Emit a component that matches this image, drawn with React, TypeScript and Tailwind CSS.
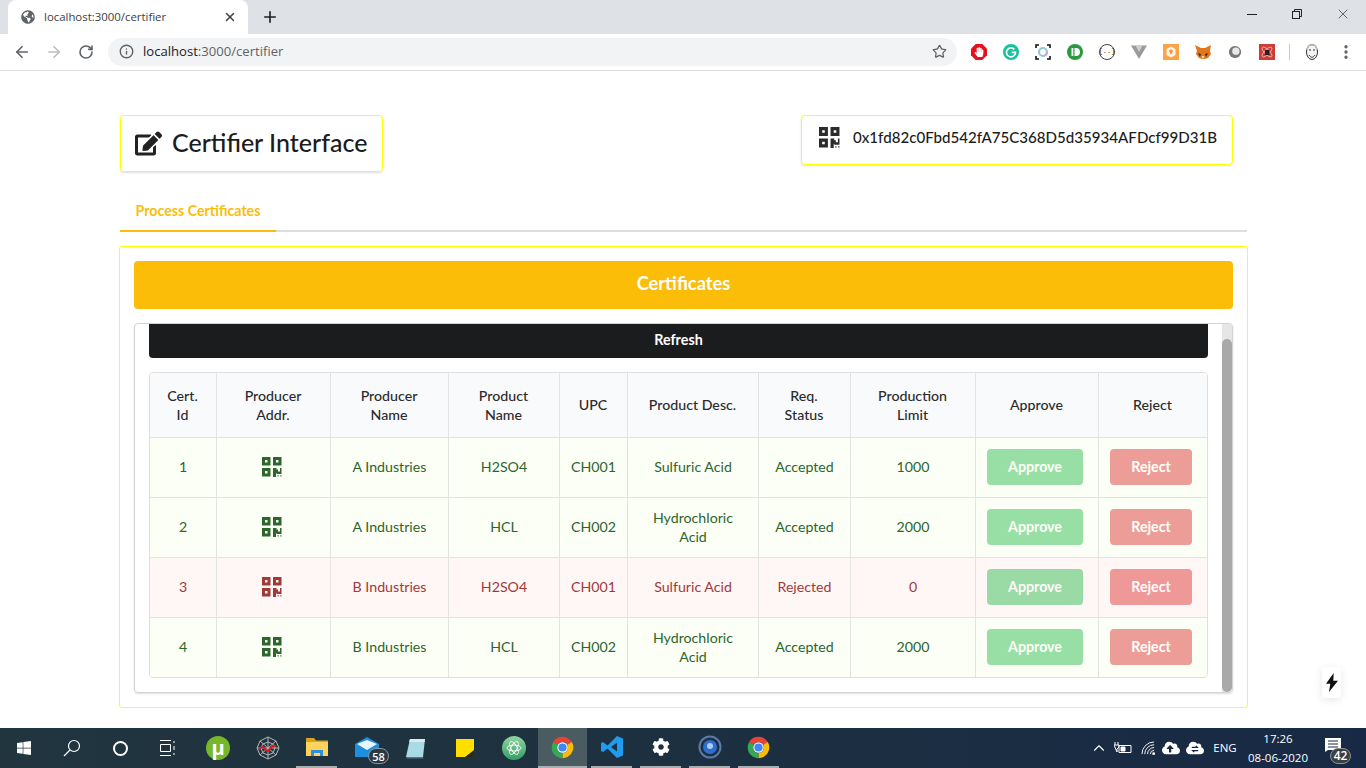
import { ArrowLeft, ArrowRight, Info, MoreVertical, Plus, RotateCw, Star, X, ChevronUp } from 'lucide-react'
import { FaCloud, FaCloudUploadAlt, FaCog, FaEdit, FaGlobeAmericas, FaHandPaper, FaWindows } from 'react-icons/fa'

const lato = "font-['Lato',sans-serif]"

const rows = [
  { id: 1, producer: 'A Industries', product: 'H2SO4', upc: 'CH001', desc: 'Sulfuric Acid', status: 'Accepted', limit: 1000 },
  { id: 2, producer: 'A Industries', product: 'HCL', upc: 'CH002', desc: 'Hydrochloric\nAcid', status: 'Accepted', limit: 2000 },
  { id: 3, producer: 'B Industries', product: 'H2SO4', upc: 'CH001', desc: 'Sulfuric Acid', status: 'Rejected', limit: 0 },
  { id: 4, producer: 'B Industries', product: 'HCL', upc: 'CH002', desc: 'Hydrochloric\nAcid', status: 'Accepted', limit: 2000 },
]

const headers = [
  'Cert.\nId',
  'Producer\nAddr.',
  'Producer\nName',
  'Product\nName',
  'UPC',
  'Product Desc.',
  'Req.\nStatus',
  'Production\nLimit',
  'Approve',
  'Reject',
]

const colWidths = ['w-[66px]', 'w-[114px]', 'w-[118px]', 'w-[111px]', 'w-[68px]', 'w-[131px]', 'w-[92px]', 'w-[125px]', 'w-[123px]', 'w-[109px]']

function QrIcon({ className }: { className?: string }) {
  return (
    <svg viewBox="0 0 20 20" className={className} fill="currentColor">
      <path fillRule="evenodd" d="M0 0h8.500v8.500H0zM3 3v2.500h2.500V3zM11 0h8.500v8.500H11zM14 3v2.500h2.500V3zM0 11h8.500v8.500H0zM3 14v2.500h2.500V14z" />
      <path d="M11 11h3.500v1.500h1.500v2h2v-3.500h1.500v6h-5v-1h-.5v4H11z" />
      <path d="M15.500 18.300h1.200v1.200h-1.200zM18.300 18.300h1.200v1.200h-1.200z" />
    </svg>
  )
}

function ChromeLogo() {
  return (
    <svg viewBox="0 0 24 24" className="h-[23px] w-[23px]">
      <circle cx="12" cy="12" r="8.500" fill="none" stroke="#ea4335" strokeWidth="5.500" strokeDasharray="17.800 35.600" transform="rotate(210 12 12)" />
      <circle cx="12" cy="12" r="8.500" fill="none" stroke="#fbbc05" strokeWidth="5.500" strokeDasharray="17.800 35.600" transform="rotate(330 12 12)" />
      <circle cx="12" cy="12" r="8.500" fill="none" stroke="#34a853" strokeWidth="5.500" strokeDasharray="17.800 35.600" transform="rotate(90 12 12)" />
      <circle cx="12" cy="12" r="5.500" fill="#fff" />
      <circle cx="12" cy="12" r="4.300" fill="#4285f4" />
    </svg>
  )
}

function Extensions() {
  return (
    <div className="ml-[6px] flex items-center">
      <div className="relative flex w-8 justify-center">
        <svg viewBox="0 0 16 16" className="h-4 w-4">
          <path d="M4.700 0h6.600L16 4.700v6.600L11.300 16H4.700L0 11.300V4.700z" fill="#e8101c" />
        </svg>
        <FaHandPaper size={10} className="absolute left-[11px] top-[3px] text-white" />
      </div>
      <div className="flex w-8 justify-center">
        <div className="flex h-4 w-4 items-center justify-center rounded-full bg-[#15c39a]">
          <svg viewBox="0 0 16 16" className="h-3 w-3" fill="none" stroke="#fff" strokeWidth="2.200">
            <path d="M12.500 4.500A6 6 0 1 0 14 8.500H9" />
          </svg>
        </div>
      </div>
      <div className="flex w-8 justify-center">
        <svg viewBox="0 0 16 16" className="h-4 w-4" fill="none">
          <path d="M1 4V1h3M12 1h3v3M15 12v3h-3M4 15H1v-3" stroke="#111" strokeWidth="1.600" />
          <circle cx="8" cy="8" r="4" stroke="#8fc7e0" strokeWidth="2.200" />
          <path d="M8 12a4 4 0 0 0 4-4" stroke="#c6a9e6" strokeWidth="2.200" />
        </svg>
      </div>
      <div className="flex w-8 justify-center">
        <svg viewBox="0 0 16 16" className="h-4 w-4">
          <circle cx="8" cy="8" r="8" fill="#2b9a3e" />
          <rect x="4.500" y="4" width="1.800" height="8" fill="#fff" />
          <path d="M7.500 4h1.500a4 4 0 0 1 0 8H7.500z" fill="#fff" />
        </svg>
      </div>
      <div className="flex w-8 justify-center">
        <div className="flex h-4 w-4 items-center justify-center rounded-full border border-[#444] font-['Liberation_Mono',monospace] text-[7px] leading-none text-[#333]">
          {'{..}'}
        </div>
      </div>
      <div className="flex w-8 justify-center">
        <svg viewBox="0 0 16 16" className="h-4 w-4">
          <path d="M0 1.500h16L8 15z" fill="#9a9a9a" />
          <path d="M4.500 1.500h7L8 8z" fill="#d0d0d0" />
        </svg>
      </div>
      <div className="flex w-8 justify-center">
        <svg viewBox="0 0 16 16" className="h-4 w-4">
          <rect width="16" height="16" fill="#fca347" />
          <path d="M8 2.500l4.500 2.600v5.800L8 13.500l-4.500-2.600V5.100z" fill="#fff" opacity="0.85" />
          <path d="M8 5l2 2-2 4-2-4z" fill="#f4913a" />
        </svg>
      </div>
      <div className="flex w-8 justify-center">
        <svg viewBox="0 0 16 16" className="h-4 w-4">
          <path d="M0 1l6 3h4l6-3-1 6 1 3-3 4-3 1H7l-3-1-3-4 1-3z" fill="#e2761b" />
          <path d="M3 9l3 1-1 3zM13 9l-3 1 1 3z" fill="#3b2a1c" />
          <path d="M6.500 12h3L8 15z" fill="#f5e0c8" />
        </svg>
      </div>
      <div className="flex w-8 justify-center">
        <svg viewBox="0 0 16 16" className="h-[14px] w-[14px]">
          <circle cx="8" cy="8" r="7" fill="#777" />
          <circle cx="9" cy="7" r="4.200" fill="#e8e8e8" />
        </svg>
      </div>
      <div className="flex w-8 justify-center">
        <svg viewBox="0 0 16 16" className="h-4 w-4">
          <rect width="16" height="16" fill="#cf3b34" />
          <ellipse cx="8" cy="8" rx="6.500" ry="2.500" fill="none" stroke="#f5c3c0" strokeWidth="0.800" transform="rotate(45 8 8)" />
          <ellipse cx="8" cy="8" rx="6.500" ry="2.500" fill="none" stroke="#f5c3c0" strokeWidth="0.800" transform="rotate(-45 8 8)" />
          <path d="M6 6h4.500v5H6z" fill="#222" />
        </svg>
      </div>
      <div className="ml-[6px] h-4 w-px bg-[#c8cacd]" />
      <div className="ml-[14px] flex w-4 justify-center">
        <svg viewBox="0 0 16 20" className="h-5 w-4" fill="none" stroke="#333" strokeWidth="1">
          <ellipse cx="8" cy="10" rx="5.500" ry="7.500" fill="#f4f4f4" />
          <path d="M3 8c0-7 10-7 10 0" strokeWidth="1.500" stroke="#bbb" />
          <path d="M5 8h2M9 8h2M5 13c2 3 4 3 6 0" />
        </svg>
      </div>
      <MoreVertical className="ml-[17px] h-[18px] w-[18px] text-[#5f6368]" strokeWidth={2.500} />
    </div>
  )
}

function Browser() {
  return (
    <div className="shrink-0 font-['Open_Sans',sans-serif]">
      <div className="flex h-[34px] items-stretch bg-[#dee1e6]">
        <div className="ml-2 flex w-[240px] items-center rounded-t-[8px] bg-white pl-[13px] pr-[11px]">
          <FaGlobeAmericas size={14} className="text-[#5f6368]" />
          <span className="ml-[9px] flex-1 text-[11.400px] text-[#3c4043]">localhost:3000/certifier</span>
          <X className="h-[14px] w-[14px] text-[#3c4043]" strokeWidth={2.500} />
        </div>
        <div className="ml-[13px] flex items-center">
          <Plus className="h-[18px] w-[18px] text-[#202124]" strokeWidth={2.200} />
        </div>
        <div className="ml-auto flex items-center pb-[6px] text-[#222]">
          <div className="flex w-[46px] justify-center">
            <div className="h-px w-[10px] translate-x-px bg-[#222]" />
          </div>
          <div className="flex w-[46px] justify-center">
            <svg viewBox="0 0 10 10" className="h-[10px] w-[10px]" fill="none" stroke="#222" strokeWidth="1">
              <rect x="0.500" y="2.500" width="7" height="7" />
              <path d="M2.500 2.500V0.500h7v7h-2" />
            </svg>
          </div>
          <div className="flex w-[46px] justify-center">
            <X className="h-[16px] w-[16px]" strokeWidth={1} />
          </div>
        </div>
      </div>
      <div className="flex h-[37px] items-center border-b border-[#dadce0] bg-white pb-px pl-[6px]">
        <div className="flex w-8 justify-center">
          <ArrowLeft className="h-[18px] w-[18px] text-[#5f6368]" strokeWidth={2.200} />
        </div>
        <div className="flex w-8 justify-center">
          <ArrowRight className="h-[18px] w-[18px] text-[#bbbdc0]" strokeWidth={2.200} />
        </div>
        <div className="flex w-8 justify-center">
          <RotateCw className="h-4 w-4 text-[#5f6368]" strokeWidth={2.400} />
        </div>
        <div className="ml-[6px] flex h-7 w-[849px] items-center rounded-full bg-[#f1f3f4] pl-[11px] pr-[10px]">
          <Info className="h-[15px] w-[15px] text-[#5f6368]" strokeWidth={2.200} />
          <span className="ml-[9px] flex-1 pt-px text-[13.100px] text-[#5f6368]">
            <span className="text-[#202124]">localhost</span>:3000/certifier
          </span>
          <Star className="h-[15px] w-[15px] text-[#5f6368]" strokeWidth={2} />
        </div>
        <Extensions />
      </div>
    </div>
  )
}

function Taskbar() {
  const running = 'border-b-2 border-[#a8adb0]'
  return (
    <div className="flex h-10 shrink-0 items-stretch bg-gradient-to-r from-[#21353f] via-[#1d3040] to-[#182945] font-['Open_Sans',sans-serif] text-white">
      <div className="flex w-12 items-center justify-center">
        <FaWindows size={16} />
      </div>
      <div className="flex w-12 items-center justify-center">
        <svg viewBox="0 0 18 18" className="h-[18px] w-[18px]" fill="none" stroke="#fff" strokeWidth="1.200">
          <circle cx="11" cy="7" r="5.500" />
          <path d="M7 11l-6 6" />
        </svg>
      </div>
      <div className="flex w-12 items-center justify-center">
        <div className="h-[15px] w-[15px] rounded-full border-2 border-white" />
      </div>
      <div className="flex w-12 items-center justify-center">
        <svg viewBox="0 0 18 16" className="h-4 w-[18px]" fill="none" stroke="#fff" strokeWidth="1">
          <path d="M1 .500h11M1 15.500h11M1.500 4.500h10v7h-10zM15 1v2M15 6v4M15 13v2" />
        </svg>
      </div>
      <div className="ml-px flex w-[50px] items-center justify-center">
        <div className="flex h-6 w-6 items-center justify-center rounded-full bg-[#76b82a] text-[20px] font-bold leading-none">µ</div>
      </div>
      <div className="flex w-[50px] items-center justify-center">
        <svg viewBox="0 0 24 24" className="h-6 w-6" fill="none" stroke="#b5b5b5" strokeWidth="1">
          <path d="M12 1l8 4 3 7-3 7-8 4-8-4-3-7 3-7zM12 1v22M1 12h22M4 5l16 14M20 5L4 19M12 6l5 2 2 4-2 5-5 2-5-2-2-5 2-4z" />
          <path d="M3 14c3-4 4-4 6-1s4 2 5 0 3-4 6-3" stroke="#e8141c" strokeWidth="2" />
        </svg>
      </div>
      <div className="flex w-[49px] items-center justify-center px-1">
        <div className={`flex h-full w-full -translate-x-px items-center justify-center ${running}`}>
          <svg viewBox="0 0 22 18" className="h-[18px] w-[22px]">
            <path d="M0 0h8l2 2.500h12V5H0z" fill="#d9a21f" />
            <path d="M0 4h22v14H0z" fill="#ffd35c" />
            <path d="M5 12h12v6h-3v-3H8v3H5z" fill="#2d8fdc" />
          </svg>
        </div>
      </div>
      <div className="relative flex w-[49px] items-center justify-center">
        <svg viewBox="0 0 24 20" className="h-5 w-6 -translate-y-[1px]">
          <path d="M0 7l12-7 12 7v13H0z" fill="#1c8fdd" />
          <path d="M2 7l10 6 10-6-10-4z" fill="#e9f4fb" />
        </svg>
        <span className="absolute left-[26px] top-[20px] flex h-4 w-[21px] items-center justify-center rounded-full border border-[#8c9399] bg-[#2a3a44] text-[11px] font-semibold leading-none">58</span>
      </div>
      <div className="flex w-[49px] items-center justify-center">
        <svg viewBox="0 0 22 22" className="h-[22px] w-[22px]">
          <path d="M5 2h15l-2 18H1z" fill="#a8dbe6" />
          <path d="M5 2h15l-.5 3H4z" fill="#e3e7e8" />
          <path d="M1 20h17l.5 1.500H2z" fill="#607078" />
        </svg>
      </div>
      <div className="flex w-[49px] items-center justify-center">
        <svg viewBox="0 0 18 18" className="h-[18px] w-[18px]">
          <path d="M0 0h18v18H0z" fill="#ffde00" />
          <path d="M18 11v7H9z" fill="#2c2a10" />
        </svg>
      </div>
      <div className="flex w-[49px] items-center justify-center">
        <div className="flex h-6 w-6 items-center justify-center rounded-full bg-gradient-to-b from-[#8fd6a1] to-[#2e9e67]">
          <svg viewBox="0 0 16 16" className="h-4 w-4" fill="none" stroke="#fff" strokeWidth="0.900">
            <ellipse cx="8" cy="8" rx="7" ry="3" transform="rotate(60 8 8)" />
            <ellipse cx="8" cy="8" rx="7" ry="3" transform="rotate(-60 8 8)" />
            <ellipse cx="8" cy="8" rx="7" ry="3" />
          </svg>
        </div>
      </div>
      <div className={`flex w-[49px] items-center justify-center bg-[#4a5b62] ${running}`}>
        <ChromeLogo />
      </div>
      <div className="flex w-[49px] items-center justify-center px-1">
        <div className={`flex h-full w-full items-center justify-center ${running}`}>
          <svg viewBox="0 0 24 24" className="h-6 w-6">
            <path d="M17 1L7.500 10.500 3 7 1 8v8l2 1 4.500-3.500L17 23l6-2.500V3.500zM17 7.500v9L11 12z" fill="#1f9cf0" />
          </svg>
        </div>
      </div>
      <div className="flex w-[49px] items-center justify-center px-1">
        <div className={`flex h-full w-full items-center justify-center ${running}`}>
          <FaCog size={18} />
        </div>
      </div>
      <div className="flex w-[49px] items-center justify-center px-1">
        <div className={`flex h-full w-full items-center justify-center ${running}`}>
          <svg viewBox="0 0 24 24" className="h-6 w-6" fill="none">
            <circle cx="12" cy="12" r="10.500" stroke="#5a7ba8" strokeWidth="2" />
            <circle cx="12" cy="12" r="7" fill="#2f6fd0" />
            <circle cx="12" cy="11" r="3" fill="#a9cdf5" />
          </svg>
        </div>
      </div>
      <div className="flex w-[49px] items-center justify-center px-1">
        <div className={`flex h-full w-full items-center justify-center ${running}`}>
          <ChromeLogo />
        </div>
      </div>
      <div className="ml-auto flex items-center">
        <ChevronUp className="h-[18px] w-[18px]" strokeWidth={1.500} />
        <svg viewBox="0 0 18 14" className="ml-[6px] h-[14px] w-[18px]" fill="none" stroke="#fff" strokeWidth="1">
          <path d="M5 4.500h12v7H5z" />
          <path d="M1 1v3M4 1v3M0 4h5v2l-2 2v3z" />
          <path d="M7 6h4v4H7z" fill="#fff" />
        </svg>
        <svg viewBox="0 0 16 16" className="ml-[9px] h-[15px] w-[15px]" fill="none" stroke="#fff" strokeWidth="1">
          <path d="M1 14A13 13 0 0 1 14 1M4 14A10 10 0 0 1 14 4M7 14a7 7 0 0 1 7-7M10 14a4 4 0 0 1 4-4" />
          <circle cx="13.500" cy="13.500" r="1.500" fill="#fff" stroke="none" />
        </svg>
        <FaCloudUploadAlt size={18} className="ml-[6px]" />
        <div className="relative ml-[6px]">
          <FaCloud size={18} />
          <svg viewBox="0 0 10 10" className="absolute left-[5px] top-[6px] h-2 w-2" fill="none" stroke="#182945" strokeWidth="1.500">
            <path d="M1 3h7L6 1M9 7H2l2 2" />
          </svg>
        </div>
        <span className="ml-[6px] w-[30px] text-center text-[11.500px]">ENG</span>
        <div className="ml-[4px] flex w-[68px] flex-col items-center text-[11.500px] leading-[19px]">
          <span>17:26</span>
          <span>08-06-2020</span>
        </div>
        <div className="relative ml-[3px] mr-[15px] flex h-10 w-[36px] items-center justify-center">
          <svg viewBox="0 0 16 14" className="mb-[6px] h-[14px] w-4">
            <path d="M0 0h16v12H3l-3 2z" fill="#fff" />
            <path d="M3 3h10M3 6h10M3 9h10" stroke="#182945" strokeWidth="1" />
          </svg>
          <span className="absolute left-[15px] top-[20px] flex h-4 w-[21px] items-center justify-center rounded-full border border-[#8c9399] bg-[#3a3f46] text-[12px] font-semibold leading-none">42</span>
        </div>
      </div>
    </div>
  )
}

function CertTable() {
  return (
    <div className="mt-[14px] overflow-hidden rounded-[4px] border border-[#dedede]">
      <table className="w-full table-fixed border-separate border-spacing-0 text-center text-[14.200px] leading-[19px]">
        <colgroup>
          {colWidths.map((w, i) => (
            <col key={i} className={w} />
          ))}
        </colgroup>
        <thead>
          <tr>
            {headers.map((h, i) => (
              <th
                key={h}
                className={`h-[64px] whitespace-pre-line bg-[#f9fafb] pl-[10px] pr-[11px] font-medium text-[#2b2b2c] ${i ? 'border-l border-[#e3e3e3]' : ''} ${h.includes('\n') ? '' : 'pb-[2px]'}`}
              >
                {h}
              </th>
            ))}
          </tr>
        </thead>
        <tbody>
          {rows.map((r) => {
            const bad = r.status === 'Rejected'
            const tone = bad ? 'bg-[#fff6f6] text-[#9f3a38]' : 'bg-[#fcfff5] text-[#2c662d]'
            const cell = `h-[60px] whitespace-pre-line border-t border-[#e3e3df] px-[11px] pb-[2px] ${tone}`
            return (
              <tr key={r.id}>
                <td className={cell}>{r.id}</td>
                <td className={`${cell} border-l`}>
                  <QrIcon className="mx-auto h-5 w-5 -translate-x-[2px]" />
                </td>
                <td className={`${cell} border-l`}>{r.producer}</td>
                <td className={`${cell} border-l`}>{r.product}</td>
                <td className={`${cell} border-l`}>{r.upc}</td>
                <td className={`${cell} border-l`}>{r.desc}</td>
                <td className={`${cell} border-l`}>{r.status}</td>
                <td className={`${cell} border-l`}>{r.limit}</td>
                <td className={`${cell} border-l`}>
                  <button type="button" className="block h-9 w-[96px] rounded-[4px] bg-[#21ba45] font-bold text-white opacity-45">
                    Approve
                  </button>
                </td>
                <td className={`${cell} border-l`}>
                  <button type="button" className="block h-9 w-[82px] rounded-[4px] bg-[#db2828] font-bold text-white opacity-45">
                    Reject
                  </button>
                </td>
              </tr>
            )
          })}
        </tbody>
      </table>
    </div>
  )
}

export default function App() {
  return (
    <div className={`relative flex h-screen flex-col overflow-hidden bg-white ${lato}`}>
      <Browser />
      <main className="min-h-0 flex-1 pl-[119px] pt-[44px]">
        <div className="w-[1129px]">
          <div className="flex items-start justify-between pl-px pr-[15px]">
            <div className="flex h-[57px] w-[263px] items-center rounded-[4px] border border-[#ffff00] pl-[14px] shadow-[0_1px_2px_rgba(34,36,38,0.15)]">
              <FaEdit size={27} className="text-[#222]" />
              <h2 className="ml-[10px] pb-[2px] text-[25px] font-medium leading-none text-[#1b1c1d]">Certifier Interface</h2>
            </div>
            <div className="flex h-[50px] w-[432px] items-start rounded-[4px] border border-[#ffff00] pl-[17px] pt-[11px] shadow-[0_1px_2px_rgba(34,36,38,0.15)]">
              <QrIcon className="h-[21px] w-[21px] text-[#2b2b2b]" />
              <span className="ml-[13px] text-[15.100px] font-medium leading-[21px] text-[#1b1c1d]">0x1fd82c0Fbd542fA75C368D5d35934AFDcf99D31B</span>
            </div>
          </div>
          <div className="ml-px mr-px mt-[18px] flex h-[42px] border-b-2 border-[#dedede]">
            <div className="-mb-[2px] flex h-[42px] w-[156px] items-center justify-center border-b-2 border-[#fbbd08] pt-px text-[14.200px] font-bold text-[#fbbd08]">
              Process Certificates
            </div>
          </div>
          <div className="mt-[14px] rounded-[3px] border border-[#ffff00] p-[14px]">
            <div className="flex h-12 items-center justify-center rounded-[4px] bg-[#fbbd08] pb-[3px] text-[18.300px] font-bold text-white">Certificates</div>
            <div className="mt-[14px] flex h-[370px] overflow-hidden rounded-[4px] border border-[#d4d4d5] shadow-[0_1px_2px_rgba(34,36,38,0.15)]">
              <div className="min-w-0 flex-1 px-[14px]">
                <button type="button" className="flex h-[34px] w-full items-center justify-center rounded-b-[4px] bg-[#1b1c1d] pb-[2px] text-[14.300px] font-bold text-white">
                  Refresh
                </button>
                <CertTable />
              </div>
              <div className="flex w-[10px] flex-col bg-[#e6e6e6]">
                <div className="mt-[15px] flex-1 rounded-[5px] bg-[#a9a9a9]" />
              </div>
            </div>
          </div>
        </div>
      </main>
      <Taskbar />
      <div className="absolute left-[1322px] top-[667px] flex h-[31px] w-[19px] items-center justify-center rounded-[3px] bg-white shadow-[0_2px_8px_rgba(0,0,0,0.1)]">
        <svg viewBox="0 0 14 22" className="h-[19px] w-[12px]" fill="#111" preserveAspectRatio="none">
          <path d="M9 0L0 12.500h5L3.500 22 14 9H8.500z" />
        </svg>
      </div>
    </div>
  )
}
